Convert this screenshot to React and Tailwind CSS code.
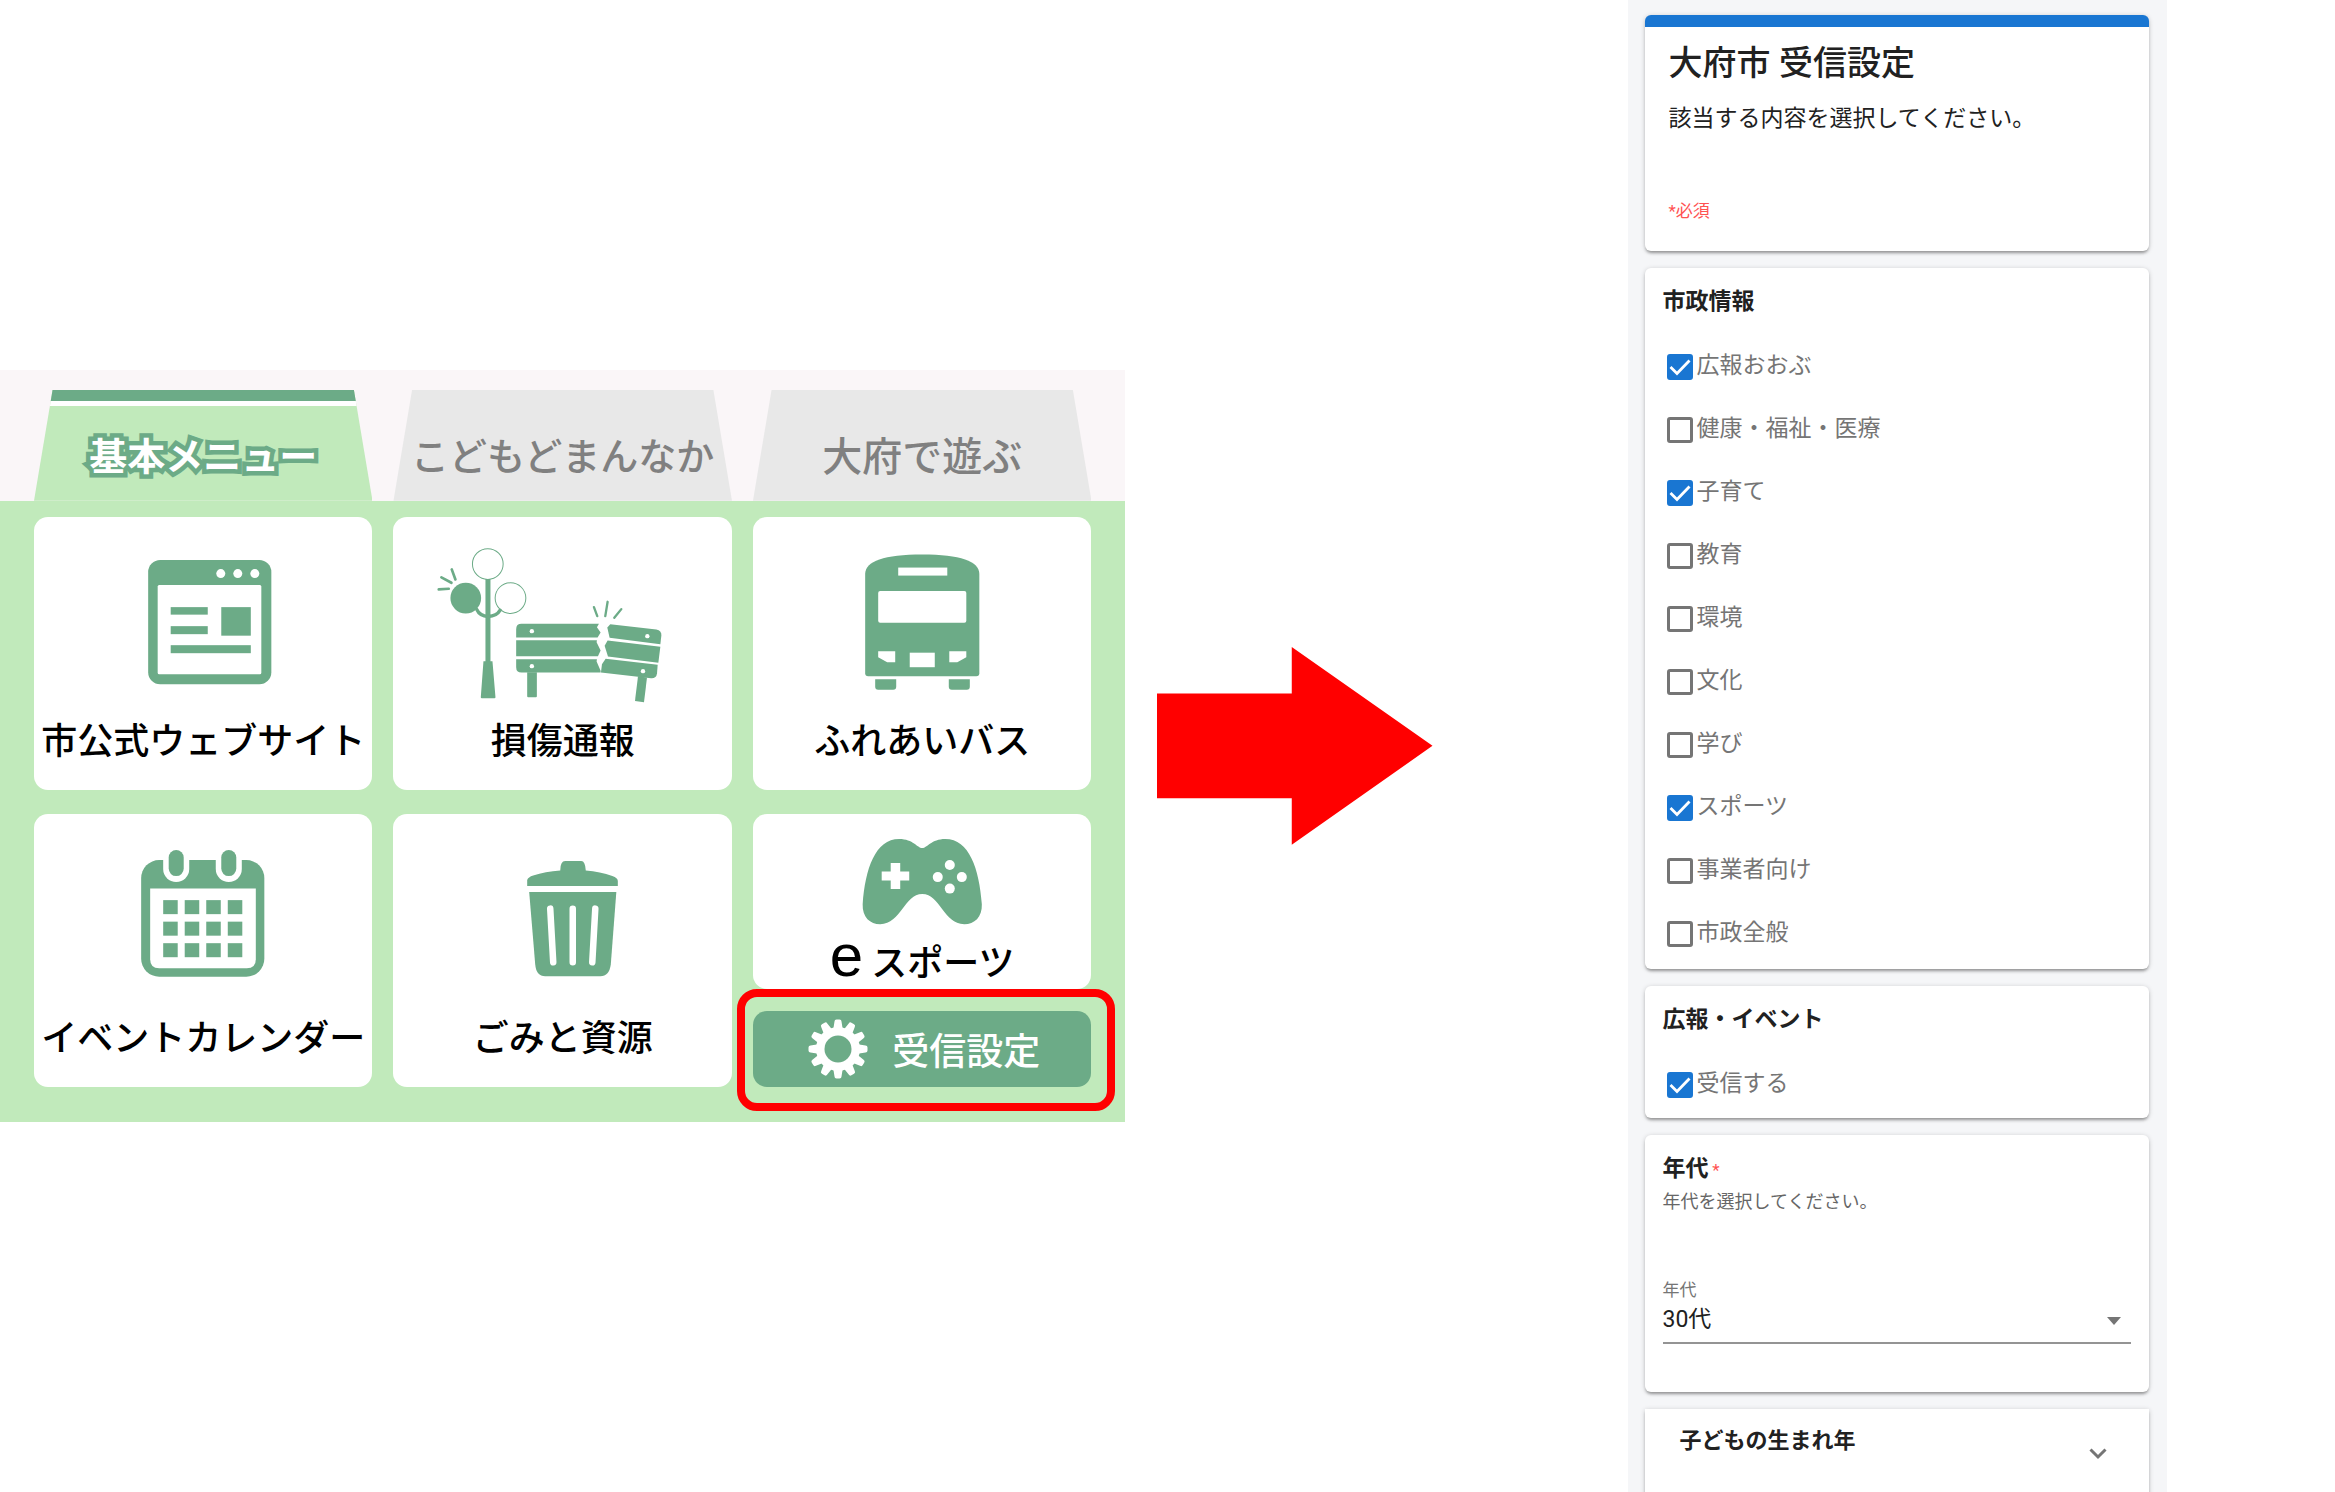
import React, { useState } from 'react';

// --- Menu illustrations ---
const WebsiteIcon = () => (
    <svg viewBox="0 0 338 188" className="w-full fill-[#6cab87]" aria-hidden="true">
        <g transform="translate(114 43)">
            <rect width="123" height="124" rx="12" />
            <rect x="9.500" y="25" width="103.500" height="89" rx="1.500" fill="#fff" />
            <circle cx="72.500" cy="13.500" r="4.500" fill="#fff" />
            <circle cx="89.500" cy="13.500" r="4.500" fill="#fff" />
            <circle cx="106.500" cy="13.500" r="4.500" fill="#fff" />
            <rect x="22.500" y="47" width="37" height="7.500" />
            <rect x="22.500" y="66" width="37" height="8" />
            <rect x="22.500" y="85" width="80" height="8" />
            <rect x="73" y="47" width="29.500" height="28.500" />
        </g>
    </svg>
);

const DamageIcon = () => (
    <svg viewBox="0 0 338 188" className="w-full fill-[#6cab87]" aria-hidden="true">
        <g transform="translate(27 13) scale(.3333)" stroke="#6cab87" strokeWidth="0" strokeLinecap="round">
            {/* street lamp */}
            <circle cx="203" cy="102" r="46" fill="none" strokeWidth="3" />
            <circle cx="271" cy="204" r="46" fill="none" strokeWidth="3" />
            <circle cx="137" cy="204" r="46" />
            <path d="M196 147h15v246h-15zM190 393h27l9 108q0 3-3 3h-38q-3 0-3-3z" />
            <path d="M170 238Q179 258 204 259Q230 258 240 240" fill="none" strokeWidth="10" />
            <path d="M95 118L106 148M64 142L94 158M56 178L86 176" fill="none" strokeWidth="8" />
            {/* broken bench */}
            <path d="M304 281H536L530 291L541 307L532 322H288V297Q288 281 304 281Z" />
            <path d="M288 330H530L529 336L541 361L533 378H288Z" />
            <path d="M288 387H530L529 394L541 422V427H304Q288 427 288 411Z" />
            <path d="M321 426H350V498Q350 501 347 501H324Q321 501 321 498Z" />
            <path d="M570 282L708 298Q724 301 723 316L720 342L568 323L561 292Z" />
            <path d="M562 331L720 350L714 398L563 379L553 347Z" />
            <path d="M556 386L712 404L710 430Q708 445 692 444L542 427L545 402Z" />
            <path d="M653 438L680 442L671 516L644 512Z" />
            <g fill="#fff">
                <circle cx="335" cy="303" r="6.500" />
                <circle cx="335" cy="408" r="6.500" />
                <circle cx="681" cy="318" r="6.500" />
                <circle cx="668" cy="423" r="6.500" />
            </g>
            <path d="M521 231L531 258M562 215L555 258M603 237L582 263" fill="none" strokeWidth="7" />
        </g>
    </svg>
);

const BusIcon = () => (
    <svg viewBox="0 0 338 188" className="w-full fill-[#6cab87]" aria-hidden="true">
        <path d="M112 57C112 44 131 37.500 169 37.500C207 37.500 226 44 226 57V156q0 3-3 3H115q-3 0-3-3z" />
        <path d="M122 162h21v7.500q0 3-3 3h-15q-3 0-3-3zM195.500 162h21v7.500q0 3-3 3h-15q-3 0-3-3z" />
        <g fill="#fff">
            <rect x="145" y="50.500" width="49" height="8" />
            <rect x="125" y="74" width="88" height="31.500" rx="2" />
            <path d="M125 134h17v11h-8l-9-5zM213 134h-17v11h8l9-5z" />
            <rect x="156.500" y="135.500" width="25" height="14.500" />
        </g>
    </svg>
);

const CalendarIcon = () => (
    <svg viewBox="0 0 338 188" className="w-full fill-[#6cab87]" aria-hidden="true">
        <rect x="107" y="46" width="123" height="116.500" rx="18" />
        <path d="M116 74.500H221.500V145q0 9-9 9H125q-9 0-9-9z" fill="#fff" />
        <rect x="129" y="30" width="26" height="38" rx="13" fill="#fff" />
        <rect x="181.500" y="30" width="26" height="38" rx="13" fill="#fff" />
        <rect x="134.500" y="36" width="15" height="26" rx="7.500" />
        <rect x="187" y="36" width="15" height="26" rx="7.500" />
        {[86, 107.5, 129].map(y => [129, 150.5, 172, 193.5].map(x => (
            <rect key={`${x}-${y}`} x={x} y={y} width="14.500" height="14" />
        )))}
    </svg>
);

const TrashIcon = () => (
    <svg viewBox="0 0 338 188" className="w-full fill-[#6cab87]" aria-hidden="true">
        <path d="M134 72V66Q135 63 140 61.500Q152 57.500 167 56.500Q167 47 172 47H188Q192 47 192.500 56.500Q207 57.500 219 62Q224.500 64 224.500 67V72Z" />
        <path d="M136 78H223L217.500 150Q216 162 207 162H152Q143 162 142 150Z" />
        <path d="M157 94.500L160 148M179.500 94.500V148M202 94.500L199 148" stroke="#fff" strokeWidth="6.500" strokeLinecap="round" />
    </svg>
);

const GamepadIcon = () => (
    <svg viewBox="0 0 338 112" className="w-full fill-[#6cab87]" aria-hidden="true">
        <path d="M169 34C164 34 160 25 146 25C122 25 112 55 109.500 90C109 103 117 110 127 110C148 110 151 80 169 80C187 80 190 110 211 110C221 110 229 103 228.500 90C226 55 216 25 192 25C178 25 174 34 169 34Z" />
        <g fill="#fff">
            <path d="M137.500 49h9.500v8.500h9v9h-9v8.500h-9.500v-8.500h-9v-9h9z" />
            <circle cx="196.500" cy="51" r="5" />
            <circle cx="184.500" cy="63" r="5" />
            <circle cx="208.500" cy="63" r="5" />
            <circle cx="196.500" cy="74.500" r="5" />
        </g>
    </svg>
);

const GearIcon = () => (
    <svg viewBox="-30 -30 60 60" className="size-15 shrink-0 fill-white" aria-hidden="true">
        {[0, 30, 60, 90, 120, 150].map(angle => (
            <path key={angle} transform={`rotate(${angle})`} d="M-3.500 -27.500q0-2 2-2h3q2 0 2 2L5 -18V18L3.500 27.500q0 2-2 2h-3q-2 0-2-2L-5 18V-18z" />
        ))}
        <circle r="22" />
        <circle r="13.500" className="fill-[#6cab87]" />
    </svg>
);

const menuItems = [
    { label: '市公式ウェブサイト', Icon: WebsiteIcon },
    { label: '損傷通報', Icon: DamageIcon },
    { label: 'ふれあいバス', Icon: BusIcon },
    { label: 'イベントカレンダー', Icon: CalendarIcon },
    { label: 'ごみと資源', Icon: TrashIcon },
];

const Tab = ({ label, active, size = 'text-[38px]' }) => (
    <button
        role="tab"
        aria-selected={active}
        className={`flex h-[111px] flex-col justify-start [clip-path:polygon(5.5%_0,94.500%_0,100%_100%,0_100%)] whitespace-nowrap ${size} ${active ? 'bg-[#c1eabb] font-bold text-white' : 'bg-[#e8e8e8] font-medium text-[#808080]'}`}
    >
        <span className={`block h-4 w-full ${active ? 'border-t-[11px] border-b-[5px] border-t-[#6cab87] border-b-white' : ''}`} />
        <span className={`block w-full pt-5 leading-[56px] ${active ? '[-webkit-text-stroke:9px_#6cab87] [paint-order:stroke_fill] [stroke-linejoin:round]' : ''}`}>{label}</span>
    </button>
);

const RichMenu = () => (
    <nav className="w-[48.2%] shrink-0 font-['Noto_Sans_CJK_JP',sans-serif]">
        <div role="tablist" className="grid grid-cols-3 gap-x-[21px] bg-[#faf6f8] px-[34px] pt-5">
            <Tab label="基本メニュー" active />
            <Tab label="こどもどまんなか" active={false} />
            <Tab label="大府で遊ぶ" active={false} size="text-[40px]" />
        </div>
        <div className="grid grid-cols-3 gap-x-[21px] gap-y-6 bg-[#c1eabb] px-[34px] pt-4 pb-[35px]">
            {menuItems.map(({ label, Icon }) => (
                <a key={label} href="#" className="block rounded-[14px] bg-white pb-[18px] text-center text-[36px] leading-[67px] font-medium whitespace-nowrap text-black">
                    <Icon />
                    {label}
                </a>
            ))}
            <div className="flex flex-col gap-[22px]">
                <a href="#" className="block rounded-[14px] bg-white text-center text-[36px] leading-[58px] font-medium whitespace-nowrap text-black">
                    <GamepadIcon />
                    <span className="font-['Liberation_Sans',sans-serif] text-[60px] leading-none">e</span> スポーツ
                </a>
                <div className="relative flex grow">
                    <button className="flex grow items-center justify-center gap-6 rounded-[14px] bg-[#6cab87] pl-1 text-[37px] leading-[56px] font-medium text-white">
                        <GearIcon />
                        受信設定
                    </button>
                    <div className="pointer-events-none absolute -top-[22px] -right-6 -bottom-6 -left-4 rounded-[20px] border-8 border-[#ff0000]" />
                </div>
            </div>
        </div>
    </nav>
);

// --- Settings form ---
const cityTopics = [
    { label: '広報おおぶ', on: true },
    { label: '健康・福祉・医療', on: false },
    { label: '子育て', on: true },
    { label: '教育', on: false },
    { label: '環境', on: false },
    { label: '文化', on: false },
    { label: '学び', on: false },
    { label: 'スポーツ', on: true },
    { label: '事業者向け', on: false },
    { label: '市政全般', on: false },
];

const Card = ({ className = '', children }) => (
    <section className={`bg-white shadow-[0_3px_3px_-1px_rgba(0,0,0,0.3),0_1px_5px_rgba(0,0,0,0.2)] ${className}`}>{children}</section>
);

const CheckRow = ({ label, on }) => {
    const [checked, setChecked] = useState(on);
    return (
        <label className="flex h-[63px] items-center gap-1 pl-1 text-[23px] text-[#757575]">
            <span className="grid">
                <input
                    type="checkbox"
                    checked={checked}
                    onChange={() => setChecked(!checked)}
                    className="col-start-1 row-start-1 size-[26px] appearance-none rounded-[3px] border-3 border-[#757575] checked:border-[#1976d2] checked:bg-[#1976d2]"
                />
                {checked && (
                    <svg viewBox="0 0 26 26" className="pointer-events-none col-start-1 row-start-1 size-[26px]" aria-hidden="true">
                        <path d="M3.500 13L10 19.500L22.500 6.500" fill="none" stroke="#fff" strokeWidth="2.800" />
                    </svg>
                )}
            </span>
            {label}
        </label>
    );
};

const SettingsForm = () => (
    <form className="mr-[7.2%] ml-auto flex h-full w-[23.1%] shrink-0 flex-col gap-[17px] bg-[#f5f6f8] pt-[15px] pr-[18px] pl-[17px] font-[Roboto,'Noto_Sans_CJK_JP',sans-serif] text-[#212121]">
        <Card className="rounded-md border-t-12 border-[#1976d2] px-6 pt-3 pb-7">
            <h1 className="text-[34px] leading-[48px] font-medium">大府市 受信設定</h1>
            <p className="mt-4 text-[23px] leading-8">該当する内容を選択してください。</p>
            <p className="mt-16 text-[17px] leading-6 text-[#ff5252]">*必須</p>
        </Card>
        <Card className="rounded-md px-[18px] pt-[18px] pb-1">
            <h2 className="mb-[17px] text-[23px] leading-8 font-bold">市政情報</h2>
            {cityTopics.map(topic => (
                <CheckRow key={topic.label} {...topic} />
            ))}
        </Card>
        <Card className="rounded-md px-[18px] pt-[18px] pb-0.5">
            <h2 className="mb-[17px] text-[23px] leading-8 font-bold">広報・イベント</h2>
            <CheckRow label="受信する" on />
        </Card>
        <Card className="rounded-md px-[18px] pt-[18px] pb-12">
            <h2 className="text-[23px] leading-8 font-bold">
                年代 <span className="-ml-0.5 text-[17px] font-normal text-[#ff5252]">*</span>
            </h2>
            <p className="mt-1 text-[18px] leading-6 text-[#666666]">年代を選択してください。</p>
            <label htmlFor="age" className="mt-16 block text-[17px] leading-6 text-[#757575]">年代</label>
            <div className="relative border-b-2 border-[#949494] pb-1">
                <select id="age" defaultValue="30代" className="block h-9 w-full appearance-none bg-transparent text-[23px]">
                    <option>20代</option>
                    <option>30代</option>
                    <option>40代</option>
                </select>
                <svg viewBox="0 0 14 8" className="pointer-events-none absolute top-[15px] right-[10px] w-[14px] fill-[#757575]" aria-hidden="true">
                    <path d="M0 0h14L7 8z" />
                </svg>
            </div>
        </Card>
        <Card>
            <button type="button" className="flex h-[90px] w-full items-start justify-between py-4 pr-[42px] pl-[35px] text-left text-[22px] leading-8 font-bold">
                子どもの生まれ年
                <svg viewBox="0 0 18 12" className="w-[18px] self-center" aria-hidden="true">
                    <path d="M1.500 1.500L9 9L16.500 1.500" fill="none" stroke="#757575" strokeWidth="3" />
                </svg>
            </button>
        </Card>
    </form>
);

// Main Application Component
export default function App() {
    return (
        <main className="flex h-screen items-center overflow-hidden bg-white">
            <RichMenu />
            <svg viewBox="0 0 276 198" className="ml-8 w-[11.8%] shrink-0 fill-[#ff0000]" aria-hidden="true">
                <path d="M0 46.500H135V0L276 99L135 198V151.500H0Z" />
            </svg>
            <SettingsForm />
        </main>
    );
}
